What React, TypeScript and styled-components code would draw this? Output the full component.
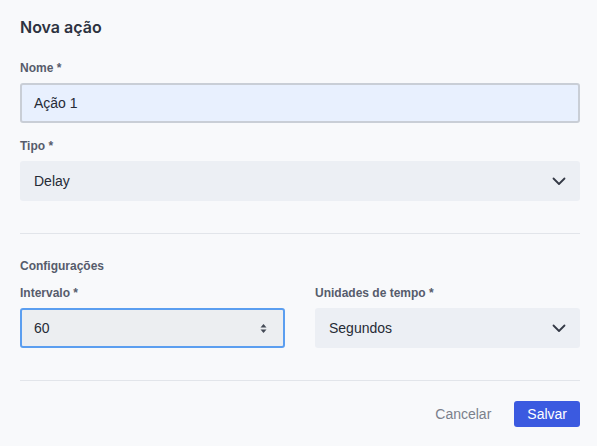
import styled, { createGlobalStyle } from "styled-components"

const GlobalStyle = createGlobalStyle`
    body {
        margin: 0;
        background-color: #f8f9fb;
        font-family: "Liberation Sans", Arial, sans-serif;
    }
`

const Panel = styled.div`
    display: flex;
    flex-direction: column;
    padding: 17px 17px 0 20px;
    width: 560px;
`

const Title = styled.h2`
    margin: 0 0 24px 0;
    font-family: Inter, "Liberation Sans", sans-serif;
    font-weight: 600;
    font-size: 16px;
    color: #2d3240;
    line-height: 20px;
`

const Field = styled.div<{ $below?: number }>`
    display: flex;
    flex-direction: column;
    gap: 8px;
    margin-bottom: ${(p) => p.$below ?? 16}px;
`

const Label = styled.label`
    font-size: 12px;
    font-weight: 700;
    color: #565c6c;
    line-height: 14px;
`

const TextInput = styled.div<{ $focused?: boolean; $autofill?: boolean }>`
    display: flex;
    align-items: center;
    justify-content: space-between;
    height: 40px;
    box-sizing: border-box;
    padding: 0 16px 0 12px;
    border-radius: 3px;
    border: 2px solid ${(p) => (p.$focused ? "#5b9ef0" : "#c9ced6")};
    background-color: ${(p) => (p.$autofill ? "#e8f0fe" : "#eceef1")};
    font-size: 14px;
    color: #262b36;
`

const Select = styled.div`
    display: flex;
    align-items: center;
    justify-content: space-between;
    height: 40px;
    box-sizing: border-box;
    padding: 0 14px;
    border-radius: 3px;
    background-color: #eceff4;
    font-size: 14px;
    color: #262b36;
`

const Divider = styled.hr`
    border: none;
    border-top: 1px solid #e2e5ea;
    margin: 0;
    width: 100%;
`

const Section = styled.h3`
    margin: 25px 0 13px 0;
    font-size: 12px;
    font-weight: 700;
    color: #565c6c;
    line-height: 14px;
`

const Row = styled.div`
    display: grid;
    grid-template-columns: 1fr 1fr;
    gap: 30px;
    margin-bottom: 32px;
`

const Footer = styled.div`
    display: flex;
    justify-content: flex-end;
    align-items: center;
    gap: 23px;
    padding-top: 20px;
`

const Button = styled.button<{ $primary?: boolean }>`
    font-family: "Liberation Sans", Arial, sans-serif;
    font-size: 14px;
    height: 26px;
    padding: ${(p) => (p.$primary ? "0 13px" : "0")};
    border: none;
    border-radius: 3px;
    background-color: ${(p) => (p.$primary ? "#3b5ae0" : "transparent")};
    color: ${(p) => (p.$primary ? "#ffffff" : "#7b808b")};
`

function Chevron() {
    return (
        <svg width="14" height="9" viewBox="0 0 14 9" fill="none">
            <path d="M1.5 1.5 L7 7 L12.5 1.5" stroke="#343946" strokeWidth="1.8" strokeLinecap="round" strokeLinejoin="round" />
        </svg>
    )
}

function Spinner() {
    return (
        <svg width="7" height="11" viewBox="0 0 7 11">
            <path d="M3.5 1 L6.5 4.5 L0.5 4.5 Z" fill="#444a56" />
            <path d="M3.5 10 L6.5 6.5 L0.5 6.5 Z" fill="#444a56" />
        </svg>
    )
}

export default function App() {
    return (
        <>
            <GlobalStyle />
            <Panel>
                <Title>Nova ação</Title>
                <Field>
                    <Label>Nome *</Label>
                    <TextInput $autofill>Ação 1</TextInput>
                </Field>
                <Field $below={32}>
                    <Label>Tipo *</Label>
                    <Select>
                        <span>Delay</span>
                        <Chevron />
                    </Select>
                </Field>
                <Divider />
                <Section>Configurações</Section>
                <Row>
                    <Field $below={0}>
                        <Label>Intervalo *</Label>
                        <TextInput $focused>
                            <span>60</span>
                            <Spinner />
                        </TextInput>
                    </Field>
                    <Field $below={0}>
                        <Label>Unidades de tempo *</Label>
                        <Select>
                            <span>Segundos</span>
                            <Chevron />
                        </Select>
                    </Field>
                </Row>
                <Divider />
                <Footer>
                    <Button>Cancelar</Button>
                    <Button $primary>Salvar</Button>
                </Footer>
            </Panel>
        </>
    )
}
